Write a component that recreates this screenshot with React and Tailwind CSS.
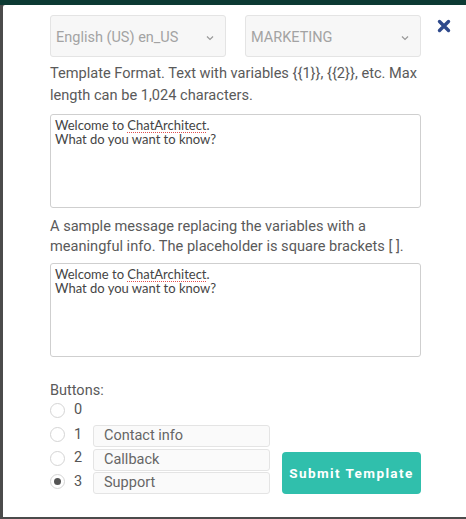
import React from "react";

const Chevron = () => (
  <svg className="w-[10px] h-[10px] text-[#999]" viewBox="0 0 10 10" fill="none" stroke="currentColor" strokeWidth="1.2">
    <path d="M2 3.5l3 3 3-3" />
  </svg>
);

const Select = ({ value }) => (
  <div className="flex-1 h-[42px] flex items-center justify-between pl-[5px] pr-[10px] pt-[3px] bg-[#f7f7f7] border border-[#e4e4e4] rounded-[3px] text-[14.5px] text-[#a3a3a3]">
    <span>{value}</span>
    <Chevron />
  </div>
);

const Message = () => (
  <div className="h-[94px] border border-[#cfcfcf] rounded-[3px] px-[4px] pt-[3px] font-['Lato',sans-serif] text-[13px] leading-[14px] text-[#444]">
    <div>
      Welcome to{" "}
      <span className="underline decoration-dotted decoration-[#e05050] decoration-[1px] underline-offset-[2px]">ChatArchitect</span>.
    </div>
    <div>What do you want to know?</div>
  </div>
);

const Radio = ({ checked }) => (
  <span className="w-[15px] h-[15px] shrink-0 rounded-full border border-[#d4d4d4] bg-white flex items-center justify-center">
    {checked && <span className="w-[7px] h-[7px] rounded-full bg-[#555]" />}
  </span>
);

const formatHint = "Template Format. Text with variables {{1}}, {{2}}, etc. Max length can be 1,024 characters.";

export default function App() {
  const buttons = [
    { n: "1", label: "Contact info" },
    { n: "2", label: "Callback" },
    { n: "3", label: "Support", checked: true },
  ];

  return (
    <div className="w-[466px] h-[519px] flex flex-col bg-[#4b4b4b] font-['Roboto',sans-serif] overflow-hidden">
      <div className="h-[5px] bg-[#0c3a33]" />
      <div className="flex-1 pl-[3px] pb-[2px] flex">
        <div className="flex-1 bg-white rounded-tl-[2px] pl-[47px] pr-[45px] pt-[10px] relative">
          <button className="absolute right-[15px] top-[14px] text-[#2f4a8c]">
            <svg className="w-[14px] h-[14px]" viewBox="0 0 14 14" stroke="currentColor" strokeWidth="3.4" strokeLinecap="round">
              <path d="M2.5 2.5l9 9M11.5 2.5l-9 9" />
            </svg>
          </button>

          <div className="flex gap-[19px]">
            <Select value="English (US) en_US" />
            <Select value="MARKETING" />
          </div>

          <p className="mt-[5px] text-[14.6px] leading-[22px] text-[#5a5a5a]">{formatHint}</p>
          <div className="mt-[8px]">
            <Message />
          </div>

          <p className="mt-[8px] text-[14.6px] leading-[20px] text-[#5a5a5a]">
            A sample message replacing the variables with a meaningful info. The placeholder is square brackets [ ].
          </p>
          <div className="mt-[7px]">
            <Message />
          </div>

          <div className="mt-[25px] flex items-end justify-between">
            <div>
              <div className="text-[14.5px] leading-[18px] text-[#5a5a5a]">Buttons:</div>
              <div className="flex items-center h-[20px] mb-[5px]">
                <Radio />
                <span className="ml-[9px] text-[14.5px] text-[#555]">0</span>
              </div>
              <div className="flex flex-col gap-[1.5px]">
                {buttons.map((b) => (
                  <div key={b.n} className="flex items-center h-[22px]">
                    <span className="-mt-[3px] flex items-center">
                      <Radio checked={b.checked} />
                      <span className="ml-[9px] w-[19px] text-[14.5px] text-[#555]">{b.n}</span>
                    </span>
                    <div className="w-[177px] h-[22px] flex items-center px-[10px] bg-[#fafafa] border border-[#e4e4e4] rounded-[3px] text-[14.5px] text-[#666]">
                      {b.label}
                    </div>
                  </div>
                ))}
              </div>
            </div>
            <button className="w-[139px] h-[42px] bg-[#30bfac] rounded-[4px] text-white text-[13.5px] font-bold tracking-[1.4px]">
              Submit Template
            </button>
          </div>
        </div>
      </div>
    </div>
  );
}
